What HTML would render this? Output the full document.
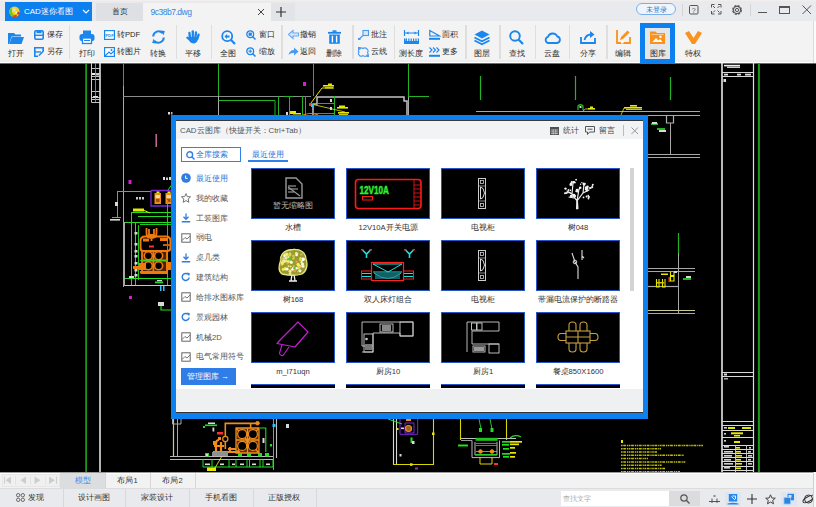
<!DOCTYPE html>
<html><head><meta charset="utf-8"><title>CAD迷你看图</title><style>
*{margin:0;padding:0;box-sizing:border-box}
html,body{width:816px;height:507px;overflow:hidden;background:#000;font-family:"Liberation Sans",sans-serif;position:relative}
.a{position:absolute}
.t{position:absolute;white-space:nowrap}
.tofu .z i{display:inline-block;width:1em;height:0.92em;vertical-align:-0.07em;overflow:hidden;text-indent:3em;font-style:normal;line-height:1;background:linear-gradient(color-mix(in srgb,currentColor 48%,transparent),color-mix(in srgb,currentColor 48%,transparent)) 50% 50%/0.9em 100% no-repeat}
svg{position:absolute;overflow:visible}
</style></head><body>

<svg width="816" height="507" style="left:0;top:0"><rect x="0" y="63" width="816" height="409" fill="#000"/><rect x="0" y="63" width="816" height="1" fill="#6a6a6a"/><line x1="86.1" y1="63" x2="86.1" y2="472" stroke="#22b422" stroke-width="1.5"/><line x1="100" y1="63" x2="100" y2="472" stroke="#e0e0e0" stroke-width="1.6"/><line x1="91.5" y1="63" x2="91.5" y2="102.5" stroke="#d0d0d0" stroke-width="1"/><line x1="91.6" y1="68.5" x2="100" y2="68.5" stroke="#d8d8d8" stroke-width="0.9"/><line x1="91.6" y1="73.5" x2="100" y2="73.5" stroke="#d8d8d8" stroke-width="0.9"/><line x1="91.6" y1="76.5" x2="100" y2="76.5" stroke="#d8d8d8" stroke-width="0.9"/><line x1="91.6" y1="79.5" x2="100" y2="79.5" stroke="#d8d8d8" stroke-width="0.9"/><line x1="91.6" y1="91.5" x2="100" y2="91.5" stroke="#d8d8d8" stroke-width="0.9"/><line x1="91.6" y1="97.5" x2="100" y2="97.5" stroke="#d8d8d8" stroke-width="0.9"/><line x1="91.6" y1="99.5" x2="100" y2="99.5" stroke="#d8d8d8" stroke-width="0.9"/><line x1="91.6" y1="102.5" x2="100" y2="102.5" stroke="#d8d8d8" stroke-width="0.9"/><line x1="95.5" y1="63" x2="95.5" y2="102" stroke="#909090" stroke-width="0.9"/><rect x="92" y="73" width="3" height="2" fill="#eee"/><rect x="96" y="74" width="3" height="1.5" fill="#ccc"/><rect x="93" y="96" width="5" height="1.6" fill="#ddd"/><line x1="123.5" y1="63" x2="123.5" y2="86" stroke="#22b422" stroke-width="1"/><line x1="123.5" y1="86" x2="123.5" y2="287" stroke="#a8a8a8" stroke-width="1"/><line x1="123" y1="96.5" x2="311" y2="96.5" stroke="#8a8a8a" stroke-width="1.1"/><line x1="218.5" y1="63" x2="218.5" y2="96" stroke="#22b422" stroke-width="1"/><line x1="218.5" y1="96" x2="218.5" y2="115" stroke="#a8a8a8" stroke-width="1"/><path d="M218.5,100.5 H275 V115" stroke="#22b422" stroke-width="1" fill="none"/><line x1="278.5" y1="96" x2="278.5" y2="115" stroke="#22b422" stroke-width="1"/><line x1="289.5" y1="96" x2="289.5" y2="115" stroke="#22b422" stroke-width="1"/><line x1="284" y1="96.5" x2="293" y2="96.5" stroke="#22b422" stroke-width="1"/><line x1="302.5" y1="96" x2="302.5" y2="115" stroke="#22b422" stroke-width="1"/><line x1="305.5" y1="96" x2="305.5" y2="115" stroke="#22b422" stroke-width="1"/><line x1="313.5" y1="63" x2="313.5" y2="96" stroke="#22b422" stroke-width="1"/><rect x="303" y="82" width="3" height="4" fill="#d020d0"/><path d="M311,103 L322,88 L334,88" stroke="#e8e800" stroke-width="1" fill="none"/><rect x="323" y="85" width="11" height="1.6" fill="#e8e800"/><rect x="325" y="87" width="8" height="1.6" fill="#c8c800"/><rect x="328" y="83.5" width="4" height="1.5" fill="#e8e800"/><path d="M313,115 V104 H317 V97 H404 V101 H407 V115" stroke="#c4c4c4" stroke-width="1.5" fill="none"/><line x1="318" y1="103.5" x2="335" y2="103.5" stroke="#22b422" stroke-width="1"/><line x1="334.5" y1="96" x2="334.5" y2="115" stroke="#22b422" stroke-width="1"/><line x1="313" y1="113.5" x2="335" y2="113.5" stroke="#22b422" stroke-width="1"/><path d="M311,104 L345,112" stroke="#e8e800" stroke-width="0.8" fill="none"/><rect x="337" y="107" width="11" height="1.6" fill="#e8e800"/><rect x="339" y="105.5" width="6" height="1.5" fill="#e8e800"/><rect x="338" y="112" width="11" height="1.6" fill="#e8e800"/><rect x="339" y="114" width="9" height="1" fill="#c8c800"/><rect x="290" y="111" width="6" height="3" fill="#e8e800"/><rect x="293" y="113" width="8" height="1.5" fill="#e8e800"/><rect x="286" y="112" width="2" height="3" fill="#d8d8d8"/><path d="M303,115 Q311,112 318,115" stroke="#f08c1e" stroke-width="1.2" fill="none"/><rect x="309" y="103" width="4" height="3" fill="#ff3030"/><rect x="311" y="104" width="3" height="3" fill="#30c0ff"/><rect x="330" y="99" width="2" height="3" fill="#d8d8d8"/><rect x="330" y="107" width="2" height="3" fill="#d8d8d8"/><line x1="408.5" y1="63" x2="408.5" y2="96" stroke="#22b422" stroke-width="1"/><line x1="408.5" y1="96" x2="408.5" y2="115" stroke="#a8a8a8" stroke-width="1"/><line x1="408" y1="96.5" x2="429" y2="96.5" stroke="#22b422" stroke-width="1"/><line x1="480.5" y1="76" x2="480.5" y2="100" stroke="#22b422" stroke-width="1.2"/><line x1="575.5" y1="76" x2="575.5" y2="100" stroke="#22b422" stroke-width="1.2"/><line x1="476" y1="111.5" x2="700" y2="111.5" stroke="#a8a8a8" stroke-width="1.2"/><line x1="648" y1="115.5" x2="700" y2="115.5" stroke="#a8a8a8" stroke-width="1.2"/><path d="M578,110 V106 Q580.5,103.5 583,106 V110" stroke="#22b422" stroke-width="1.3" fill="none"/><rect x="579.5" y="106" width="2" height="2" fill="#d8d8d8"/><rect x="588" y="108" width="7" height="1.6" fill="#e8e800"/><rect x="590" y="106.5" width="3" height="1.5" fill="#e8e800"/><path d="M583,111 Q585,108 588,109" stroke="#e8e800" stroke-width="0.8" fill="none"/><rect x="624" y="107" width="18" height="1.6" fill="#e8e800"/><rect x="630" y="105" width="7" height="1.6" fill="#e8e800"/><rect x="626" y="109" width="16" height="1" fill="#c8c800"/><line x1="621" y1="115" x2="624" y2="108" stroke="#e8e800" stroke-width="0.8"/><line x1="722" y1="63" x2="722" y2="472" stroke="#e8e8e8" stroke-width="1.6"/><line x1="753.5" y1="63" x2="753.5" y2="472" stroke="#e0e0e0" stroke-width="1.2"/><line x1="758.9" y1="63" x2="758.9" y2="472" stroke="#1a9a1a" stroke-width="2"/><line x1="722" y1="72.5" x2="753.3" y2="72.5" stroke="#d8d8d8" stroke-width="1"/><line x1="722" y1="76.5" x2="753.3" y2="76.5" stroke="#d8d8d8" stroke-width="1"/><line x1="722" y1="372.5" x2="753.3" y2="372.5" stroke="#d8d8d8" stroke-width="1"/><line x1="722" y1="376.5" x2="753.3" y2="376.5" stroke="#d8d8d8" stroke-width="1"/><line x1="722" y1="421.5" x2="753.3" y2="421.5" stroke="#d8d8d8" stroke-width="1"/><line x1="722" y1="425.5" x2="753.3" y2="425.5" stroke="#d8d8d8" stroke-width="1"/><line x1="722" y1="430.5" x2="753.3" y2="430.5" stroke="#d8d8d8" stroke-width="1"/><line x1="722" y1="437.5" x2="753.3" y2="437.5" stroke="#d8d8d8" stroke-width="1"/><line x1="722" y1="445.5" x2="753.3" y2="445.5" stroke="#d8d8d8" stroke-width="1"/><line x1="722" y1="449.5" x2="753.3" y2="449.5" stroke="#d8d8d8" stroke-width="1"/><line x1="722" y1="453.5" x2="753.3" y2="453.5" stroke="#d8d8d8" stroke-width="1"/><line x1="722" y1="457.5" x2="753.3" y2="457.5" stroke="#d8d8d8" stroke-width="1"/><line x1="722" y1="461.5" x2="753.3" y2="461.5" stroke="#d8d8d8" stroke-width="1"/><line x1="722" y1="466.5" x2="753.3" y2="466.5" stroke="#d8d8d8" stroke-width="1"/><line x1="722" y1="470.5" x2="753.3" y2="470.5" stroke="#d8d8d8" stroke-width="1"/><line x1="735.5" y1="445" x2="735.5" y2="472" stroke="#d0d0d0" stroke-width="0.9"/><line x1="746.5" y1="445" x2="746.5" y2="472" stroke="#d0d0d0" stroke-width="0.9"/><rect x="724" y="64.8" width="16" height="1.6" fill="#eee"/><rect x="727" y="66.6" width="13" height="1.4" fill="#ccc"/><rect x="724" y="73.7" width="4" height="1.8" fill="#ddd"/><rect x="737" y="73.7" width="4" height="1.8" fill="#ddd"/><rect x="745" y="73.7" width="6" height="1.8" fill="#ddd"/><rect x="723.5" y="79" width="2.5" height="3" fill="#ddd"/><rect x="724" y="373.5" width="3" height="2" fill="#ddd"/><rect x="724" y="378" width="4" height="1.5" fill="#aaa"/><rect x="728" y="427" width="7" height="2" fill="#e8e800"/><rect x="742" y="427" width="9" height="2" fill="#e8e800"/><rect x="731" y="432.3" width="12" height="2" fill="#e8e800"/><rect x="734" y="435" width="6" height="1.5" fill="#e8e800"/><rect x="734" y="441" width="6" height="2" fill="#e8e800"/><rect x="736" y="447" width="4" height="1.6" fill="#e8e800"/><rect x="736" y="451" width="5" height="1.6" fill="#e8e800"/><rect x="736" y="455" width="6" height="1.6" fill="#e8e800"/><rect x="736" y="459" width="5" height="1.6" fill="#e8e800"/><rect x="736" y="463" width="6" height="1.6" fill="#e8e800"/><rect x="736" y="467.5" width="5" height="1.6" fill="#e8e800"/><rect x="724" y="427" width="3" height="1.6" fill="#cfcfcf"/><rect x="724" y="433" width="2" height="1.6" fill="#cfcfcf"/><rect x="724" y="440" width="2" height="1.6" fill="#cfcfcf"/><rect x="724" y="446" width="5" height="1.6" fill="#cfcfcf"/><rect x="724" y="451" width="9" height="1.6" fill="#cfcfcf"/><rect x="724" y="455" width="8" height="1.6" fill="#cfcfcf"/><rect x="724" y="459" width="7" height="1.6" fill="#cfcfcf"/><rect x="724" y="463" width="9" height="1.6" fill="#cfcfcf"/><rect x="724" y="467" width="6" height="1.6" fill="#cfcfcf"/><rect x="748" y="451" width="3" height="1.6" fill="#cfcfcf"/><rect x="748" y="455" width="4" height="1.6" fill="#cfcfcf"/><rect x="748" y="459" width="3" height="1.6" fill="#cfcfcf"/><rect x="748" y="463" width="4" height="1.6" fill="#cfcfcf"/><rect x="749" y="447" width="2" height="1.6" fill="#cfcfcf"/><path d="M666.5,115 V123 H673.5 V115" stroke="#b0b0b0" stroke-width="1.2" fill="none"/><line x1="670.5" y1="77" x2="670.5" y2="100" stroke="#22b422" stroke-width="1.2"/><line x1="670.5" y1="123" x2="670.5" y2="155" stroke="#a8a8a8" stroke-width="1"/><line x1="648" y1="154.5" x2="700" y2="154.5" stroke="#a8a8a8" stroke-width="1.2"/><line x1="648" y1="157.5" x2="700" y2="157.5" stroke="#a8a8a8" stroke-width="1.2"/><rect x="651" y="123" width="7" height="2" fill="#22b422"/><rect x="652" y="122" width="5" height="2" fill="#d8d8d8"/><rect x="657" y="128" width="8" height="2" fill="#22b422"/><rect x="659" y="130" width="7" height="2" fill="#d8d8d8"/><line x1="678.5" y1="233" x2="678.5" y2="253" stroke="#22b422" stroke-width="1.2"/><line x1="678.5" y1="253" x2="678.5" y2="314" stroke="#a8a8a8" stroke-width="1"/><line x1="648" y1="268.5" x2="695" y2="268.5" stroke="#a8a8a8" stroke-width="1.2"/><line x1="648" y1="271.5" x2="695" y2="271.5" stroke="#a8a8a8" stroke-width="1.2"/><line x1="648" y1="286.5" x2="678" y2="286.5" stroke="#a8a8a8" stroke-width="1.2"/><line x1="648" y1="310.5" x2="695" y2="310.5" stroke="#c8c890" stroke-width="1.2"/><line x1="648" y1="313.5" x2="695" y2="313.5" stroke="#a8a8a8" stroke-width="1.2"/><path d="M656.5,279 V287 H659 V279 M662.5,279 V287 H665 V279" stroke="#e8e800" stroke-width="1.1" fill="none"/><rect x="657" y="282" width="7" height="1.5" fill="#c8c800"/><path d="M670.5,272 V281 H674 V272" stroke="#e8e800" stroke-width="1.1" fill="none"/><rect x="671" y="275" width="3" height="2" fill="#e8e800"/><rect x="668.5" y="277" width="1.5" height="5" fill="#ff3030"/><rect x="661" y="273.5" width="7" height="1.5" fill="#e8e800"/><rect x="674" y="271" width="3" height="2" fill="#d8d8d8"/><rect x="683" y="278" width="8" height="2" fill="#22b422"/><rect x="686" y="276" width="5" height="2" fill="#d8d8d8"/><rect x="155.5" y="134" width="1.4" height="13" fill="#d870a8"/><rect x="168" y="112" width="2" height="2.5" fill="#ddd"/><rect x="171" y="112" width="1.5" height="2.5" fill="#bbb"/><rect x="128.5" y="180" width="3" height="4" fill="#d020d0"/><rect x="163" y="177" width="2" height="3" fill="#ddd"/><rect x="166" y="177.5" width="2" height="2.5" fill="#ccc"/><rect x="169" y="177" width="2" height="3" fill="#ddd"/><line x1="168" y1="190" x2="175" y2="180" stroke="#22dd22" stroke-width="1"/><line x1="117" y1="191.5" x2="151" y2="191.5" stroke="#22dd22" stroke-width="1"/><path d="M151,190.5 H175 M151,190.5 V206 H175" stroke="#7a2ad0" stroke-width="1.3" fill="none"/><rect x="154.5" y="193" width="6.5" height="11" fill="#f08c1e"/><rect x="155.5" y="195" width="4.5" height="3" fill="#f8e0a0"/><rect x="156.0" y="199" width="3.5" height="3" fill="#a05010"/><rect x="156.5" y="191.5" width="3" height="1.5" fill="#f0f000"/><rect x="165.5" y="193" width="6.5" height="11" fill="#f08c1e"/><rect x="166.5" y="195" width="4.5" height="3" fill="#f8e0a0"/><rect x="167.0" y="199" width="3.5" height="3" fill="#a05010"/><rect x="167.5" y="191.5" width="3" height="1.5" fill="#f0f000"/><line x1="117.5" y1="191" x2="117.5" y2="217.5" stroke="#22dd22" stroke-width="1"/><rect x="115" y="202" width="3" height="4" fill="#d8d8d8"/><rect x="136" y="197" width="2" height="2.5" fill="#ccc"/><rect x="139" y="197" width="2" height="2.5" fill="#ccc"/><rect x="142" y="197" width="2" height="2.5" fill="#ccc"/><line x1="112" y1="217.5" x2="121" y2="217.5" stroke="#22dd22" stroke-width="1"/><rect x="110" y="219" width="10" height="1.6" fill="#d8d8d8"/><line x1="131" y1="212.5" x2="171" y2="212.5" stroke="#22dd22" stroke-width="1"/><rect x="133" y="208.5" width="11" height="3" fill="#e8e800"/><line x1="143" y1="210" x2="150" y2="213" stroke="#e8e800" stroke-width="1"/><line x1="131.5" y1="212" x2="131.5" y2="286" stroke="#22dd22" stroke-width="1"/><line x1="135.5" y1="222" x2="135.5" y2="286" stroke="#22dd22" stroke-width="1"/><line x1="138.5" y1="225" x2="138.5" y2="280" stroke="#22dd22" stroke-width="0.9"/><line x1="138" y1="216.5" x2="171" y2="216.5" stroke="#22dd22" stroke-width="1"/><line x1="124" y1="222.5" x2="171" y2="222.5" stroke="#22dd22" stroke-width="1.1"/><line x1="140" y1="224.5" x2="171" y2="224.5" stroke="#22dd22" stroke-width="0.9"/><line x1="167.5" y1="200" x2="167.5" y2="286" stroke="#22dd22" stroke-width="0.9"/><rect x="134.5" y="232" width="3" height="2.5" fill="#d8d8d8"/><rect x="134.5" y="243" width="3" height="2.5" fill="#d8d8d8"/><rect x="134.5" y="250" width="3" height="2.5" fill="#d8d8d8"/><rect x="134.5" y="255" width="3" height="2.5" fill="#d8d8d8"/><rect x="134.5" y="262" width="3" height="2.5" fill="#d8d8d8"/><rect x="134.5" y="269" width="3" height="2.5" fill="#d8d8d8"/><rect x="134.5" y="274" width="3" height="2.5" fill="#d8d8d8"/><rect x="142" y="251" width="25" height="22" fill="#4a2400"/><path d="M146.5,228 V233 Q146.5,238 151.5,238 Q156.5,238 156.5,233 V228 M149,229 V235 H154 V229 M151.5,238 V241" stroke="#f07a10" stroke-width="1.8" fill="none"/><path d="M140.5,241 Q140.5,236.5 145,236.5 H166 Q170.5,236.5 170.5,241 V248 Q170.5,251 167,251 H143 Q140.5,251 140.5,248 Z" stroke="#f07a10" stroke-width="2" fill="none"/><rect x="143" y="238.5" width="6" height="3" fill="#f07a10"/><rect x="160" y="238" width="8" height="3" fill="#f07a10"/><rect x="163" y="244" width="7" height="2" fill="#c06010"/><path d="M142,251 V273 H167 V251 M142,260.5 H167 M153.4,251 V273" stroke="#f07a10" stroke-width="1.8" fill="none"/><circle cx="148.3" cy="255.8" r="4" stroke="#f07a10" stroke-width="1.6" fill="#000"/><circle cx="158.6" cy="255.8" r="4" stroke="#f07a10" stroke-width="1.6" fill="#000"/><circle cx="148.3" cy="265.8" r="4" stroke="#f07a10" stroke-width="1.6" fill="#000"/><circle cx="158.6" cy="265.8" r="4" stroke="#f07a10" stroke-width="1.6" fill="#000"/><rect x="139" y="263" width="7" height="7" fill="#f07a10"/><rect x="140" y="271" width="28" height="2.5" fill="#f07a10"/><rect x="133" y="266" width="6" height="3" fill="#f07a10"/><rect x="166" y="262" width="5" height="8" fill="#f07a10"/><line x1="140" y1="260.5" x2="167" y2="260.5" stroke="#22dd22" stroke-width="0.8"/><rect x="149" y="245.5" width="5" height="2" fill="#ff3030"/><line x1="124" y1="278.5" x2="171" y2="278.5" stroke="#22dd22" stroke-width="1.2"/><line x1="124" y1="285.5" x2="171" y2="285.5" stroke="#c8c8c8" stroke-width="1.2"/><line x1="124.5" y1="222" x2="124.5" y2="286" stroke="#a8a8a8" stroke-width="1"/><rect x="155" y="281.5" width="8" height="1.8" fill="#22dd22"/><rect x="157" y="280" width="5" height="1.2" fill="#d8d8d8"/><rect x="129" y="276" width="5" height="2" fill="#d8d8d8"/><rect x="160" y="286" width="1.5" height="5" fill="#30c0ff"/><rect x="163" y="286" width="1.5" height="5" fill="#30c0ff"/><rect x="129" y="296" width="3" height="3" fill="#d020d0"/><rect x="158" y="302" width="6" height="4" fill="#d8d8d8"/><path d="M161,306 V310 H171" stroke="#22dd22" stroke-width="1.2" fill="none"/><line x1="173.5" y1="419" x2="173.5" y2="456" stroke="#c8c890" stroke-width="1.2"/><line x1="177.5" y1="419" x2="177.5" y2="456" stroke="#a8a8a8" stroke-width="1"/><path d="M172.5,419 V424 H181 V419" stroke="#a8a8a8" stroke-width="1" fill="none"/><line x1="170" y1="456.5" x2="273" y2="456.5" stroke="#b8b8b8" stroke-width="1.1"/><line x1="170" y1="459.5" x2="273" y2="459.5" stroke="#b8b8b8" stroke-width="1.1"/><rect x="236" y="428" width="23" height="25" fill="#5a3000"/><path d="M236,428 H259 V453 H236 Z M236,428 L259,453 M259,428 L236,453 M247.5,428 V453 M236,440 H259" stroke="#f08c1e" stroke-width="1.3" fill="none"/><circle cx="242.2" cy="434.1" r="4.5" stroke="#f08c1e" stroke-width="1.2" fill="#000"/><circle cx="252.9" cy="434.1" r="4.5" stroke="#f08c1e" stroke-width="1.2" fill="#000"/><circle cx="242.2" cy="445.9" r="4.5" stroke="#f08c1e" stroke-width="1.2" fill="#000"/><circle cx="252.9" cy="445.9" r="4.5" stroke="#f08c1e" stroke-width="1.2" fill="#000"/><path d="M225.3,449 V423.4 H257.4 M250.6,423.4 V428" stroke="#f08c1e" stroke-width="1.6" fill="none"/><circle cx="257.5" cy="423.2" r="1.8" stroke="#f08c1e" stroke-width="1" fill="#f08c1e"/><circle cx="225.3" cy="439" r="2.6" stroke="#f08c1e" stroke-width="1.2" fill="#000"/><path d="M213,452 H240 M216,452 V444 Q216,440 219,440 M221,452 V442 M214,446 H224 M228,449 H236 M230,452 V447" stroke="#f08c1e" stroke-width="2.2" fill="none"/><rect x="213" y="441" width="3" height="4" fill="#f08c1e"/><rect x="218" y="437" width="3" height="3" fill="#f08c1e"/><rect x="205" y="424.5" width="12" height="1.6" fill="#22dd22"/><rect x="208" y="422.5" width="7" height="1.5" fill="#ddd"/><rect x="203" y="426" width="2" height="2" fill="#22dd22"/><rect x="212.5" y="427.5" width="1.8" height="4" fill="#d8d8d8"/><rect x="217" y="432" width="6" height="2.5" fill="#ff3030"/><rect x="212" y="452" width="16" height="4" fill="#909090"/><path d="M203,459.4 V467 H273 V459.4 M212,459.4 V467 M229,459.4 V467 M236,459.4 V467 M247,459.4 V467 M249.5,459.4 V467 M260,459.4 V467 M263,459.4 V467" stroke="#22dd22" stroke-width="1" fill="none"/><rect x="205" y="463.5" width="5" height="1.6" fill="#ddd"/><rect x="220" y="463.5" width="4" height="1.6" fill="#ddd"/><rect x="232" y="463.5" width="3" height="1.6" fill="#ddd"/><rect x="240" y="463.5" width="4" height="1.6" fill="#ddd"/><rect x="252" y="463.5" width="4" height="1.6" fill="#ddd"/><rect x="266" y="463.5" width="4" height="1.6" fill="#ddd"/><rect x="205" y="453" width="4" height="3.5" fill="#22dd22"/><rect x="238" y="453" width="4" height="3.5" fill="#22dd22"/><rect x="247" y="453" width="4" height="3.5" fill="#22dd22"/><rect x="258" y="453" width="4" height="3.5" fill="#22dd22"/><rect x="265" y="453" width="4" height="3.5" fill="#22dd22"/><rect x="206" y="454" width="2" height="2" fill="#d8d8d8"/><path d="M260,428 H265.8 V452" stroke="#22dd22" stroke-width="1.1" fill="none"/><rect x="262.5" y="438" width="2" height="5" fill="#ddd"/><rect x="270" y="444" width="2" height="2.5" fill="#22dd22"/><rect x="207" y="467.5" width="9" height="3.5" fill="#e8e800"/><line x1="215" y1="468" x2="222" y2="456" stroke="#e8e800" stroke-width="0.9"/><line x1="273.5" y1="419" x2="273.5" y2="470" stroke="#30b0ff" stroke-width="1"/><line x1="276.5" y1="419" x2="276.5" y2="458" stroke="#c0c0c0" stroke-width="1.1"/><rect x="272.5" y="424" width="3" height="3" fill="#30c0ff"/><rect x="286" y="424" width="3" height="4" fill="#d8d8d8"/><line x1="393.5" y1="419" x2="393.5" y2="465" stroke="#d8d8d8" stroke-width="1.1"/><line x1="396.5" y1="419" x2="396.5" y2="465" stroke="#d8d8d8" stroke-width="1.1"/><path d="M400,419 V434.3 H417.7 V419 M405,423 H414 V433 H405 Z" stroke="#7a2ad0" stroke-width="1" fill="none"/><circle cx="408.5" cy="428.5" r="3" stroke="#f08c1e" stroke-width="1.2" fill="#a06020"/><rect x="406" y="419" width="5" height="2" fill="#f08c1e"/><line x1="388" y1="419" x2="402" y2="424" stroke="#22dd22" stroke-width="1"/><rect x="401" y="427.5" width="3" height="1.6" fill="#d8d8d8"/><rect x="396.5" y="428" width="2" height="2" fill="#e8e800"/><rect x="410.5" y="437.5" width="2" height="5.5" fill="#22dd22"/><rect x="412" y="441" width="2.5" height="3" fill="#d8d8d8"/><rect x="399.5" y="454" width="2" height="2.5" fill="#d8d8d8"/><line x1="433.5" y1="419" x2="433.5" y2="465" stroke="#d8d800" stroke-width="1.1"/><line x1="393" y1="464.5" x2="433.3" y2="464.5" stroke="#d8d800" stroke-width="1.1"/><rect x="432" y="432.5" width="2.5" height="2.5" fill="#e8e800"/><rect x="410" y="463.3" width="2.5" height="2.5" fill="#e8e800"/><rect x="415" y="467.5" width="3" height="2" fill="#9030c0"/><line x1="460.5" y1="419" x2="460.5" y2="440" stroke="#d8d800" stroke-width="1.1"/><line x1="506.5" y1="419" x2="506.5" y2="440" stroke="#d8d800" stroke-width="1.1"/><line x1="479" y1="419" x2="481" y2="429" stroke="#22dd22" stroke-width="0.9"/><line x1="490" y1="419" x2="492" y2="429" stroke="#22dd22" stroke-width="0.9"/><rect x="479" y="428" width="3" height="4" fill="#22dd22"/><rect x="490.5" y="428" width="3" height="4" fill="#22dd22"/><line x1="461" y1="438.5" x2="516" y2="438.5" stroke="#c0c0c0" stroke-width="1"/><line x1="461" y1="440.5" x2="472" y2="440.5" stroke="#c0c0c0" stroke-width="0.8"/><rect x="475.6" y="437.8" width="22" height="3" fill="#20c020"/><path d="M472,440.5 V457.6 H499.5 V440.5 M475,442 V455 H497 V442" stroke="#b8b8b8" stroke-width="1" fill="none"/><line x1="476" y1="443.5" x2="497" y2="443.5" stroke="#a08020" stroke-width="0.9"/><line x1="476" y1="445.5" x2="497" y2="445.5" stroke="#a08020" stroke-width="0.9"/><line x1="476" y1="451.5" x2="497" y2="451.5" stroke="#c0c000" stroke-width="0.8"/><circle cx="480.5" cy="451.5" r="1.8" stroke="#f08c1e" stroke-width="1" fill="#f08c1e"/><circle cx="492" cy="451.5" r="1.8" stroke="#f08c1e" stroke-width="1" fill="#f08c1e"/><line x1="476" y1="454.5" x2="497" y2="454.5" stroke="#22dd22" stroke-width="0.9"/><path d="M480,457 V464 H492 V457" stroke="#d8d800" stroke-width="1" fill="none"/><rect x="494" y="463" width="4" height="2" fill="#ff3030"/><rect x="502" y="441" width="8" height="1.7" fill="#22dd22"/><rect x="502" y="444" width="7" height="1.7" fill="#22dd22"/><rect x="503" y="448" width="6" height="1.7" fill="#22dd22"/><rect x="502" y="453" width="8" height="1.7" fill="#22dd22"/><rect x="503" y="456" width="6" height="1.7" fill="#22dd22"/><rect x="510" y="441" width="12" height="1.7" fill="#e8e800"/><rect x="510" y="443.5" width="9" height="1.7" fill="#e8e800"/><rect x="510" y="447" width="5" height="1.7" fill="#e8e800"/><rect x="510" y="452" width="6" height="1.7" fill="#e8e800"/><rect x="510" y="456" width="5" height="1.7" fill="#e8e800"/><path d="M510,438 Q515,434 521,437" stroke="#22dd22" stroke-width="1.2" fill="none"/><rect x="458" y="444.5" width="10" height="2" fill="#22dd22"/><rect x="621" y="440" width="2" height="3" fill="#e8e800"/><line x1="621" y1="445.4" x2="703" y2="445.4" stroke="#f0f000" stroke-width="1.5" stroke-dasharray="1.6 0.7 2.8 0.9 1.2 0.6" opacity="0.8"/><line x1="621" y1="448.7" x2="661" y2="448.7" stroke="#f0f000" stroke-width="1.5" stroke-dasharray="1.6 0.7 2.8 0.9 1.2 0.6" opacity="0.8"/><line x1="621" y1="452.0" x2="657" y2="452.0" stroke="#f0f000" stroke-width="1.5" stroke-dasharray="1.6 0.7 2.8 0.9 1.2 0.6" opacity="0.8"/><line x1="621" y1="455.29999999999995" x2="684" y2="455.29999999999995" stroke="#f0f000" stroke-width="1.5" stroke-dasharray="1.6 0.7 2.8 0.9 1.2 0.6" opacity="0.8"/><line x1="621" y1="458.59999999999997" x2="648" y2="458.59999999999997" stroke="#f0f000" stroke-width="1.5" stroke-dasharray="1.6 0.7 2.8 0.9 1.2 0.6" opacity="0.8"/><line x1="621" y1="461.9" x2="686" y2="461.9" stroke="#f0f000" stroke-width="1.5" stroke-dasharray="1.6 0.7 2.8 0.9 1.2 0.6" opacity="0.8"/><line x1="621" y1="465.2" x2="662" y2="465.2" stroke="#f0f000" stroke-width="1.5" stroke-dasharray="1.6 0.7 2.8 0.9 1.2 0.6" opacity="0.8"/><line x1="621" y1="468.5" x2="666" y2="468.5" stroke="#f0f000" stroke-width="1.5" stroke-dasharray="1.6 0.7 2.8 0.9 1.2 0.6" opacity="0.8"/><line x1="621" y1="471.79999999999995" x2="680" y2="471.79999999999995" stroke="#f0f000" stroke-width="1.5" stroke-dasharray="1.6 0.7 2.8 0.9 1.2 0.6" opacity="0.8"/></svg>
<div class="a" style="left:0px;top:0px;width:816px;height:21px;background:#e9eaee;"></div>
<div class="a" style="left:0px;top:0px;width:816px;height:1px;background:#f3eeee;"></div>
<div class="a" style="left:5px;top:2px;width:87px;height:19px;background:#0c80ee;"></div>
<svg width="12" height="12" style="left:8.5px;top:6px" viewBox="0 0 12 12"><circle cx="5.5" cy="5.7" r="5.2" fill="#f2d21a"/><path d="M2.2,1.8 A5.2,5.2 0 0 0 4,10.6 L5.2,8.6 A3,3 0 0 1 3.4,4 Z" fill="#6cc82a"/><path d="M3.2,10.3 A5.2,5.2 0 0 0 8.2,10.2 L7.2,8.6 Z" fill="#e8302a"/><rect x="3.4" y="2.6" width="3" height="3" fill="#c8e8e0"/><circle cx="9.3" cy="7.2" r="1.4" fill="#e8302a"/><rect x="6.3" y="5.8" width="2" height="1.6" fill="#f8f8f0"/></svg>
<div class="t" style="left:24px;top:6.0px;font-size:8.01px;color:#fff;line-height:12px;">CAD<span class="z">迷你看图</span></div>
<svg width="8" height="6" style="left:82px;top:9px"><path d="M1,1 L4,4 L7,1" stroke="#fff" stroke-width="1.1" fill="none"/></svg>
<div class="a" style="left:96px;top:3px;width:47px;height:18px;background:#dfe0e4;"></div>
<div class="t" style="left:99.5px;width:40px;text-align:center;top:6.0px;font-size:7.57px;color:#333;line-height:12px;"><span class="z">首页</span></div>
<div class="a" style="left:143px;top:3px;width:128px;height:18px;background:#f3f3f3;"></div>
<div class="t" style="left:150.5px;top:6.1px;font-size:8.54px;color:#2f88e2;line-height:12px;letter-spacing:-0.5px;">9c38b7.dwg</div>
<svg width="8" height="8" style="left:256.5px;top:8px"><path d="M1,1 L7,7 M7,1 L1,7" stroke="#444" stroke-width="1"/></svg>
<div class="a" style="left:271px;top:3px;width:24px;height:18px;background:#e3e4e8;"></div>
<svg width="10" height="10" style="left:276px;top:7px"><path d="M5,0 V10 M0,5 H10" stroke="#333" stroke-width="1.2"/></svg>
<div class="a" style="left:636px;top:3px;width:40px;height:12px;border:1.2px solid #7ab0ea;border-radius:6px;background:#f0f5fb"></div>
<div class="t" style="left:636.0px;width:40px;text-align:center;top:3.6999999999999993px;font-size:7.12px;color:#2a70c8;line-height:12px;font-weight:500;"><span class="z">未登录</span></div>
<div class="a" style="left:682px;top:4px;width:1px;height:12px;background:#d4d4d8;"></div>
<svg width="10" height="10" style="left:689px;top:4.5px"><rect x="0.5" y="0.5" width="8.5" height="8.5" rx="1" stroke="#555" fill="none"/><text x="4.75" y="7.6" font-size="7" font-family="Liberation Sans" text-anchor="middle" fill="#555">?</text></svg>
<svg width="11" height="11" style="left:711px;top:4px"><path d="M0.5,3.5 V0.5 H3.5 M7,0.5 H10 V3.5 M10,7 V10 H7 M3.5,10 H0.5 V7 M2,2 L4,4 M8.5,2 L6.5,4 M2,8.5 L4,6.5 M8.5,8.5 L6.5,6.5" stroke="#555" stroke-width="1" fill="none"/></svg>
<svg width="12" height="12" style="left:731px;top:3.5px"><circle cx="6" cy="6" r="4.2" stroke="#555" stroke-width="1.5" fill="none" stroke-dasharray="2.2 1.1"/><circle cx="6" cy="6" r="3.6" stroke="#555" stroke-width="1" fill="none"/><circle cx="6" cy="6" r="1.6" stroke="#555" stroke-width="1" fill="none"/></svg>
<div class="a" style="left:749.5px;top:4px;width:1px;height:12px;background:#d4d4d8;"></div>
<div class="a" style="left:758px;top:12px;width:9px;height:1px;background:#555;"></div>
<div class="a" style="left:779px;top:5.5px;width:10.5px;height:8px;border:1px solid #555;border-top-width:2px"></div>
<svg width="10" height="10" style="left:802px;top:4.5px"><path d="M0.5,0.5 L9,9 M9,0.5 L0.5,9" stroke="#555" stroke-width="1"/></svg>
<div class="a" style="left:0px;top:21px;width:816px;height:42px;background:#f3f3f3;"></div>
<div class="a" style="left:0px;top:60px;width:816px;height:2px;background:#ededed;"></div>
<div class="a" style="left:0px;top:62px;width:816px;height:1px;background:#ffffff;"></div>
<div class="a" style="left:68.5px;top:25px;width:1.5px;height:34px;background:#dedede;"></div>
<div class="a" style="left:175.5px;top:25px;width:1.5px;height:34px;background:#dedede;"></div>
<div class="a" style="left:210.5px;top:25px;width:1.5px;height:34px;background:#dedede;"></div>
<div class="a" style="left:281px;top:25px;width:1.5px;height:34px;background:#dedede;"></div>
<div class="a" style="left:352px;top:25px;width:1.5px;height:34px;background:#dedede;"></div>
<div class="a" style="left:393.5px;top:25px;width:1.5px;height:34px;background:#dedede;"></div>
<div class="a" style="left:465px;top:25px;width:1.5px;height:34px;background:#dedede;"></div>
<div class="a" style="left:499px;top:25px;width:1.5px;height:34px;background:#dedede;"></div>
<div class="a" style="left:534.5px;top:25px;width:1.5px;height:34px;background:#dedede;"></div>
<div class="a" style="left:568.5px;top:25px;width:1.5px;height:34px;background:#dedede;"></div>
<div class="a" style="left:606px;top:25px;width:1.5px;height:34px;background:#dedede;"></div>
<div class="a" style="left:813px;top:21px;width:1px;height:42px;background:#dcdcdc;"></div>
<div class="a" style="left:814px;top:21px;width:2px;height:42px;background:#fafafa;"></div>
<div class="a" style="left:640px;top:23px;width:35px;height:40px;background:#0c80ee;"></div>
<div class="a" style="left:645px;top:28px;width:25px;height:31px;background:#e4e6ea;"></div>
<svg width="16" height="12" style="left:7.7px;top:31.5px" viewBox="0 0 16 12"><path d="M0,1 H6 L7.5,2.5 H13 V4.5 H3.5 L1.2,12 H0 Z" fill="#1a86ee"/><path d="M3.8,5 H16 L13.5,12 H1.3 Z" fill="#1a86ee"/></svg>
<div class="t" style="left:-4.0px;width:40px;text-align:center;top:47.5px;font-size:7.57px;color:#2a2a2a;line-height:12px;font-weight:500;"><span class="z">打开</span></div>
<svg width="16" height="14" style="left:78.5px;top:30px" viewBox="0 0 16 14"><path d="M4,0.5 H12 V4 H4 Z" fill="#1a86ee"/><rect x="0.5" y="4" width="15" height="7" rx="2.5" fill="#1a86ee"/><rect x="3.5" y="8" width="9" height="5.5" fill="#fff" stroke="#1a86ee" stroke-width="1.3"/><rect x="5" y="10" width="6" height="1" fill="#1a86ee"/></svg>
<div class="t" style="left:66.5px;width:40px;text-align:center;top:47.5px;font-size:7.57px;color:#2a2a2a;line-height:12px;font-weight:500;"><span class="z">打印</span></div>
<svg width="15" height="14" style="left:150.5px;top:30.3px" viewBox="0 0 15 14"><path d="M2.2,6.5 A5.3,5.3 0 0 1 11.5,3.2" stroke="#1a86ee" stroke-width="2" fill="none"/><path d="M9.5,0.5 L13.8,1 L12.5,5.2 Z" fill="#1a86ee"/><path d="M12.8,7.5 A5.3,5.3 0 0 1 3.5,10.8" stroke="#1a86ee" stroke-width="2" fill="none"/><path d="M5.5,13.5 L1.2,13 L2.5,8.8 Z" fill="#1a86ee"/></svg>
<div class="t" style="left:137.5px;width:40px;text-align:center;top:47.5px;font-size:7.57px;color:#2a2a2a;line-height:12px;font-weight:500;"><span class="z">转换</span></div>
<svg width="14" height="14" style="left:186px;top:29.8px" viewBox="0 0 14 14"><g stroke="#1a86ee" stroke-width="2.3" stroke-linecap="round" fill="none"><path d="M4,8 L3.4,2.8"/><path d="M6.8,7 V1.3"/><path d="M9.4,7.5 L10,2.3"/><path d="M11.3,8.8 L12.6,4.6"/><path d="M5,10.5 L1.4,7.6"/></g><path d="M3.6,7 H12 L11.5,10.5 Q10.5,13.4 7.2,13.4 Q4.6,13.4 3.2,10.8 Z" fill="#1a86ee"/></svg>
<div class="t" style="left:173.0px;width:40px;text-align:center;top:47.5px;font-size:7.57px;color:#2a2a2a;line-height:12px;font-weight:500;"><span class="z">平移</span></div>
<svg width="15" height="15" style="left:220.5px;top:30px" viewBox="0 0 15 15"><circle cx="6.2" cy="6.2" r="5" stroke="#1a86ee" stroke-width="1.8" fill="none"/><path d="M9.8,9.8 L14,14" stroke="#1a86ee" stroke-width="2.2"/><path d="M3.5,6.5 L6,4 L6,9 Z" fill="#1a86ee"/><path d="M6,5.5 H8.5 V7.5 H6" fill="#1a86ee"/></svg>
<div class="t" style="left:208.0px;width:40px;text-align:center;top:47.5px;font-size:7.57px;color:#2a2a2a;line-height:12px;font-weight:500;"><span class="z">全图</span></div>
<svg width="13" height="14" style="left:327.5px;top:30px" viewBox="0 0 13 14"><rect x="4.5" y="0.3" width="4" height="1.6" fill="#1a86ee"/><rect x="0" y="1.9" width="13" height="1.8" fill="#1a86ee"/><path d="M1.2,4.5 H11.8 V13.8 H1.2 Z" fill="#1a86ee"/><rect x="3.7" y="5.8" width="1.4" height="6.6" fill="#fff"/><rect x="7.9" y="5.8" width="1.4" height="6.6" fill="#fff"/></svg>
<div class="t" style="left:314.0px;width:40px;text-align:center;top:47.5px;font-size:7.57px;color:#2a2a2a;line-height:12px;font-weight:500;"><span class="z">删除</span></div>
<svg width="15" height="14" style="left:403.7px;top:30.3px" viewBox="0 0 15 14"><path d="M0.5,0 V6 M14.5,0 V6 M0.5,3 H14.5" stroke="#1a86ee" stroke-width="1.2"/><path d="M2.5,3 L4.5,1.6 V4.4 Z M12.5,3 L10.5,1.6 V4.4 Z" fill="#1a86ee"/><path d="M0,8.5 V14 H15 V8.5 H13.8 V11 H12.6 V8.5 H11.4 V11 H10.2 V8.5 H9 V11 H7.8 V8.5 H6.6 V11 H5.4 V8.5 H4.2 V11 H3 V8.5 H1.6 V11 H1.2 V8.5 Z" fill="#1a86ee"/></svg>
<div class="t" style="left:391.0px;width:40px;text-align:center;top:47.5px;font-size:7.57px;color:#2a2a2a;line-height:12px;font-weight:500;"><span class="z">测长度</span></div>
<svg width="16" height="15" style="left:474px;top:29.5px" viewBox="0 0 16 15"><path d="M8,0.5 L15.5,4.5 L8,8.5 L0.5,4.5 Z" fill="#1a86ee"/><path d="M0.5,7.5 L8,11.3 L15.5,7.5" stroke="#1a86ee" stroke-width="1.7" fill="none"/><path d="M0.5,10.5 L8,14.3 L15.5,10.5" stroke="#1a86ee" stroke-width="1.7" fill="none"/></svg>
<div class="t" style="left:462.0px;width:40px;text-align:center;top:47.5px;font-size:7.57px;color:#2a2a2a;line-height:12px;font-weight:500;"><span class="z">图层</span></div>
<svg width="15" height="15" style="left:509px;top:30px" viewBox="0 0 15 15"><circle cx="6" cy="6" r="4.8" stroke="#1a86ee" stroke-width="1.9" fill="none"/><path d="M9.5,9.5 L14,14" stroke="#1a86ee" stroke-width="2.2"/></svg>
<div class="t" style="left:496.5px;width:40px;text-align:center;top:47.5px;font-size:7.57px;color:#2a2a2a;line-height:12px;font-weight:500;"><span class="z">查找</span></div>
<svg width="17" height="12" style="left:543.5px;top:31.5px" viewBox="0 0 17 12"><path d="M4.2,11 H13 A3.3,3.3 0 0 0 13.3,4.5 A5,5 0 0 0 4,4.8 A3.2,3.2 0 0 0 4.2,11 Z" stroke="#1a86ee" stroke-width="1.8" fill="none"/></svg>
<div class="t" style="left:532.0px;width:40px;text-align:center;top:47.5px;font-size:7.57px;color:#2a2a2a;line-height:12px;font-weight:500;"><span class="z">云盘</span></div>
<svg width="16" height="14" style="left:579.5px;top:30px" viewBox="0 0 16 14"><path d="M1,7 V13 H15 V8" stroke="#1a86ee" stroke-width="1.8" fill="none"/><path d="M4.5,10 C5.5,6 8,4.5 11,4.5" stroke="#1a86ee" stroke-width="1.8" fill="none"/><path d="M10,1 L14.5,4.5 L10,8 Z" fill="#1a86ee"/></svg>
<div class="t" style="left:567.5px;width:40px;text-align:center;top:47.5px;font-size:7.57px;color:#2a2a2a;line-height:12px;font-weight:500;"><span class="z">分享</span></div>
<svg width="15" height="14" style="left:615.5px;top:30.3px" viewBox="0 0 15 14"><path d="M1,0 V13 H14 V7" stroke="#f7931e" stroke-width="1.8" fill="none"/><path d="M4,10 L5,7 L11.5,0.5 L13.5,2.5 L7,9 Z" fill="#f7931e"/><rect x="5" y="11" width="2.5" height="2.5" fill="#fff"/></svg>
<div class="t" style="left:603.0px;width:40px;text-align:center;top:47.5px;font-size:7.57px;color:#2a2a2a;line-height:12px;font-weight:500;"><span class="z">编辑</span></div>
<svg width="15" height="13" style="left:650px;top:30.8px" viewBox="0 0 15 13"><path d="M0,0.5 H5.5 L7,2 H15 V13 H0 Z" fill="#f7931e"/><rect x="1.2" y="3" width="12.6" height="0.8" fill="#fff" opacity="0.6"/><path d="M2.5,11 L6,7 L8.5,9.5 L10,8 L12.5,11 Z" fill="#fff"/><circle cx="10.5" cy="5.8" r="1.2" fill="#fff"/></svg>
<div class="t" style="left:637.5px;width:40px;text-align:center;top:47.5px;font-size:7.57px;color:#2a2a2a;line-height:12px;font-weight:500;"><span class="z">图库</span></div>
<svg width="17" height="13" style="left:684.5px;top:31px" viewBox="0 0 17 13"><path d="M0,2 L4,0 L8.5,7 L13,0 L17,2 L10,13 H7 Z" fill="#f7931e"/></svg>
<div class="t" style="left:673.0px;width:40px;text-align:center;top:47.5px;font-size:7.57px;color:#2a2a2a;line-height:12px;font-weight:500;"><span class="z">特权</span></div>
<svg width="10" height="10" style="left:34px;top:30.200000000000003px" viewBox="0 0 10 10"><rect x="0.8" y="0.8" width="8.4" height="8.4" rx="1.2" stroke="#1a86ee" stroke-width="1.6" fill="none"/><rect x="2.5" y="1" width="5" height="2.2" fill="#1a86ee"/><rect x="1" y="4.6" width="8" height="1.4" fill="#1a86ee"/></svg>
<div class="t" style="left:46.5px;top:29.200000000000003px;font-size:7.57px;color:#2a2a2a;line-height:12px;font-weight:500;"><span class="z">保存</span></div>
<svg width="10" height="10" style="left:34px;top:47.0px" viewBox="0 0 10 10"><path d="M9.2,4 V0.8 H0.8 V9.2 H4" stroke="#1a86ee" stroke-width="1.6" fill="none"/><rect x="1" y="4.3" width="6" height="1.3" fill="#1a86ee"/><path d="M4.5,9.5 L5,7.5 L9,3.5 L10,4.5 L6,8.5 Z" fill="#1a86ee"/></svg>
<div class="t" style="left:46.5px;top:46.0px;font-size:7.57px;color:#2a2a2a;line-height:12px;font-weight:500;"><span class="z">另存</span></div>
<svg width="11" height="10" style="left:104px;top:30.200000000000003px" viewBox="0 0 11 10"><rect x="0.6" y="0.6" width="9.8" height="8.8" stroke="#1a86ee" stroke-width="1.2" fill="#fff"/><text x="5.5" y="6.8" font-size="4.2" font-weight="bold" font-family="Liberation Sans" text-anchor="middle" fill="#1a86ee">PDF</text></svg>
<div class="t" style="left:117px;top:29.200000000000003px;font-size:7.57px;color:#2a2a2a;line-height:12px;font-weight:500;"><span class="z">转</span>PDF</div>
<svg width="11" height="10" style="left:104px;top:47.0px" viewBox="0 0 11 10"><rect x="0.6" y="0.6" width="9.8" height="8.8" stroke="#1a86ee" stroke-width="1.2" fill="#fff"/><path d="M1,9 L5,5 L7,7 L10,4" stroke="#1a86ee" stroke-width="1.1" fill="none"/><circle cx="7.5" cy="3" r="1" fill="#1a86ee"/></svg>
<div class="t" style="left:117px;top:46.0px;font-size:7.57px;color:#2a2a2a;line-height:12px;font-weight:500;"><span class="z">转图片</span></div>
<svg width="10" height="10" style="left:245.5px;top:30.200000000000003px" viewBox="0 0 10 10"><circle cx="4.2" cy="4.2" r="3.4" stroke="#1a86ee" stroke-width="1.3" fill="none"/><rect x="2.6" y="2.6" width="3.2" height="3.2" fill="#1a86ee"/><path d="M6.5,6.5 L9.5,9.5" stroke="#1a86ee" stroke-width="1.5"/></svg>
<div class="t" style="left:259px;top:29.200000000000003px;font-size:7.57px;color:#2a2a2a;line-height:12px;font-weight:500;"><span class="z">窗口</span></div>
<svg width="10" height="10" style="left:245.5px;top:47.0px" viewBox="0 0 10 10"><circle cx="4.2" cy="4.2" r="3.4" stroke="#1a86ee" stroke-width="1.3" fill="none"/><path d="M2.4,4.2 H6 M4.2,2.4 V6" stroke="#1a86ee" stroke-width="1"/><path d="M6.5,6.5 L9.5,9.5" stroke="#1a86ee" stroke-width="1.5"/></svg>
<div class="t" style="left:259px;top:46.0px;font-size:7.57px;color:#2a2a2a;line-height:12px;font-weight:500;"><span class="z">缩放</span></div>
<svg width="11" height="9" style="left:288px;top:30.200000000000003px" viewBox="0 0 11 9"><path d="M0.5,4.5 L5,0.5 V3 H10.5 V6 H5 V8.5 Z" stroke="#6aaaf0" stroke-width="1.1" fill="#d6e8fb"/></svg>
<div class="t" style="left:300px;top:29.200000000000003px;font-size:7.57px;color:#2a2a2a;line-height:12px;font-weight:500;"><span class="z">撤销</span></div>
<svg width="11" height="9" style="left:288px;top:47.0px" viewBox="0 0 11 9"><path d="M10.5,4.5 L6,0.5 V3 C3,3 1,5 0.5,8 C2,6.5 3.5,6 6,6 V8.5 Z" fill="#4a9af0"/></svg>
<div class="t" style="left:300px;top:46.0px;font-size:7.57px;color:#2a2a2a;line-height:12px;font-weight:500;"><span class="z">返回</span></div>
<svg width="11" height="10" style="left:358px;top:30.200000000000003px" viewBox="0 0 11 10"><rect x="5" y="0.5" width="5.5" height="5" stroke="#4a9af0" stroke-width="1.1" fill="#d6e8fb"/><path d="M0.5,9.5 L5,5.5" stroke="#4a9af0" stroke-width="1.1"/><rect x="0" y="8" width="2.5" height="2" fill="#4a9af0"/></svg>
<div class="t" style="left:371px;top:29.200000000000003px;font-size:7.57px;color:#2a2a2a;line-height:12px;font-weight:500;"><span class="z">批注</span></div>
<svg width="11" height="10" style="left:358px;top:47.0px" viewBox="0 0 11 10"><path d="M1.5,2 Q3,0 5,1.5 Q7,0 9,2 Q11,4 9.5,5.5 Q11,8 8.5,9 Q6,10 5,8.5 Q3,10 1.5,8.5 Q-0.5,6.5 1,5 Q-0.5,3.5 1.5,2 Z" stroke="#4a9af0" stroke-width="1.1" fill="none"/><rect x="0" y="0" width="2.5" height="2.5" fill="#4a9af0"/><rect x="8.5" y="7.5" width="2.5" height="2.5" fill="#4a9af0"/></svg>
<div class="t" style="left:371px;top:46.0px;font-size:7.57px;color:#2a2a2a;line-height:12px;font-weight:500;"><span class="z">云线</span></div>
<svg width="11" height="10" style="left:429px;top:30.200000000000003px" viewBox="0 0 11 10"><path d="M0.8,0.5 V6 H10.5 Z" stroke="#1a86ee" stroke-width="1.2" fill="none"/><rect x="0" y="7.8" width="11" height="2" fill="#1a86ee"/></svg>
<div class="t" style="left:442px;top:29.200000000000003px;font-size:7.57px;color:#2a2a2a;line-height:12px;font-weight:500;"><span class="z">面积</span></div>
<svg width="11" height="10" style="left:429px;top:47.0px" viewBox="0 0 11 10"><path d="M0.5,0.5 L3,3 L0.5,5.5 M4,0.5 L6.5,3 L4,5.5 M7.5,0.5 L10,3 L7.5,5.5" stroke="#1a86ee" stroke-width="1.1" fill="none"/><rect x="0" y="7.8" width="11" height="2" fill="#1a86ee"/></svg>
<div class="t" style="left:442px;top:46.0px;font-size:7.57px;color:#2a2a2a;line-height:12px;font-weight:500;"><span class="z">更多</span></div>
<div class="a" style="left:0px;top:472px;width:816px;height:16px;background:#f2f2f2;"></div>
<div class="a" style="left:0px;top:472px;width:816px;height:1px;background:#9a9a9a;"></div>
<div class="a" style="left:0px;top:473px;width:816px;height:1px;background:#ffffff;"></div>
<div class="a" style="left:2px;top:474px;width:58px;height:13px;border:1px solid #e6e6e6;background:#f0f0f0"></div>
<svg width="60" height="12" style="left:0px;top:474px" viewBox="0 0 60 12"><path d="M4.5,2.5 V10" stroke="#d0d0d0" stroke-width="1"/><path d="M11,2.5 L5.5,6.2 L11,10 Z M26,2.5 L20.5,6.2 L26,10 Z M34.5,2.5 L40.5,6.2 L34.5,10 Z M49,2.5 L55,6.2 L49,10 Z" fill="#cdcdcd"/><path d="M56.5,2.5 V10" stroke="#d0d0d0" stroke-width="1.2"/><path d="M15.5,2 V11 M30.5,2 V11 M45.5,2 V11" stroke="#e4e4e4" stroke-width="1"/></svg>
<div class="a" style="left:60px;top:473px;width:45px;height:15px;background:#dcdde0;"></div>
<div class="t" style="left:62.5px;width:40px;text-align:center;top:475.0px;font-size:7.57px;color:#2f8ef0;line-height:12px;font-weight:500;"><span class="z">模型</span></div>
<div class="a" style="left:105px;top:473px;width:1px;height:15px;background:#d6d6d6;"></div>
<div class="t" style="left:107.5px;width:40px;text-align:center;top:475.0px;font-size:7.57px;color:#333;line-height:12px;"><span class="z">布局</span>1</div>
<div class="a" style="left:149.5px;top:473px;width:1px;height:15px;background:#d6d6d6;"></div>
<div class="t" style="left:152.5px;width:40px;text-align:center;top:475.0px;font-size:7.57px;color:#333;line-height:12px;"><span class="z">布局</span>2</div>
<div class="a" style="left:195px;top:473px;width:1px;height:15px;background:#d6d6d6;"></div>
<div class="a" style="left:0px;top:488px;width:816px;height:19px;background:#e9eaed;"></div>
<div class="a" style="left:0px;top:488px;width:816px;height:1px;background:#dcdcdc;"></div>
<div class="a" style="left:62.5px;top:489px;width:1px;height:18px;background:#d8d8da;"></div>
<div class="a" style="left:125px;top:489px;width:1px;height:18px;background:#d8d8da;"></div>
<div class="a" style="left:189px;top:489px;width:1px;height:18px;background:#d8d8da;"></div>
<div class="a" style="left:253px;top:489px;width:1px;height:18px;background:#d8d8da;"></div>
<div class="a" style="left:315.5px;top:489px;width:1px;height:18px;background:#d8d8da;"></div>
<svg width="9" height="9" style="left:15.5px;top:493px" viewBox="0 0 9 9"><circle cx="2.2" cy="2.2" r="1.7" stroke="#666" stroke-width="1" fill="none"/><circle cx="6.8" cy="2.2" r="1.7" stroke="#666" stroke-width="1" fill="none"/><circle cx="2.2" cy="6.8" r="1.7" stroke="#666" stroke-width="1" fill="none"/><circle cx="6.8" cy="6.8" r="1.7" stroke="#666" stroke-width="1" fill="none"/></svg>
<div class="t" style="left:28px;top:492.0px;font-size:7.57px;color:#333;line-height:12px;"><span class="z">发现</span></div>
<div class="t" style="left:64.0px;width:60px;text-align:center;top:492.0px;font-size:7.57px;color:#333;line-height:12px;"><span class="z">设计画图</span></div>
<div class="t" style="left:127.0px;width:60px;text-align:center;top:492.0px;font-size:7.57px;color:#333;line-height:12px;"><span class="z">家装设计</span></div>
<div class="t" style="left:190.5px;width:60px;text-align:center;top:492.0px;font-size:7.57px;color:#333;line-height:12px;"><span class="z">手机看图</span></div>
<div class="t" style="left:254.0px;width:60px;text-align:center;top:492.0px;font-size:7.57px;color:#333;line-height:12px;"><span class="z">正版授权</span></div>
<div class="a" style="left:561px;top:491px;width:108px;height:14.5px;background:#fff;"></div>
<div class="t" style="left:563px;top:492.5px;font-size:7.12px;color:#aaa;line-height:12px;"><span class="z">查找文字</span></div>
<div class="a" style="left:669px;top:491px;width:31px;height:14.5px;background:#dcdcde;"></div>
<svg width="10" height="10" style="left:680px;top:493.5px"><circle cx="4" cy="4" r="3.2" stroke="#555" stroke-width="1.2" fill="none"/><path d="M6.3,6.3 L9.5,9.5" stroke="#555" stroke-width="1.3"/></svg>
<svg width="11" height="8" style="left:708.5px;top:494.5px" viewBox="0 0 11 8"><path d="M0,6.5 H11 M3,3.5 V8 M8,3.5 V8" stroke="#555" stroke-width="1"/><rect x="4.5" y="0" width="2" height="2" fill="#888"/></svg>
<div class="a" style="left:725px;top:491.5px;width:16px;height:14.5px;background:#dde6f1;"></div>
<svg width="12" height="12" style="left:727px;top:492.5px" viewBox="0 0 12 12"><rect x="1.8" y="1" width="8.4" height="7.5" fill="#2a86e6"/><path d="M4.5,3.5 L8,7 M5.5,3 H8.5 V6" stroke="#e8f0fa" stroke-width="1" fill="none"/><path d="M0.5,10.5 Q6,9 11.5,10.5 V11.5 H0.5 Z" fill="#2a86e6"/></svg>
<svg width="10" height="10" style="left:747px;top:494px"><path d="M5,0 V10 M0,5 H10" stroke="#333" stroke-width="1.1"/></svg>
<svg width="11" height="11" style="left:765px;top:493.5px" viewBox="0 0 11 11"><path d="M5.5,0.8 L6.9,4 L10.3,4.2 L7.7,6.4 L8.5,9.8 L5.5,8 L2.5,9.8 L3.3,6.4 L0.7,4.2 L4.1,4 Z" stroke="#444" stroke-width="1" fill="none"/></svg>
<div class="a" style="left:780.5px;top:491.5px;width:16px;height:14.5px;background:#dde6f1;"></div>
<svg width="12" height="12" style="left:782.5px;top:492.5px" viewBox="0 0 12 12"><rect x="4.5" y="0.8" width="6.5" height="6.5" fill="#2a86e6"/><rect x="1" y="4.5" width="6.5" height="6.5" fill="#2a86e6" stroke="#9cc4f2" stroke-width="0.8"/><rect x="5.5" y="2" width="3" height="2.5" fill="#cfe2f8"/></svg>
<svg width="13" height="12" style="left:801.5px;top:493px" viewBox="0 0 13 12"><circle cx="6.5" cy="6" r="4" stroke="#333" stroke-width="1" fill="none"/><ellipse cx="6.5" cy="6" rx="6.2" ry="2.3" transform="rotate(-30 6.5 6)" stroke="#333" stroke-width="1" fill="none"/></svg>
<div class="a" style="left:813px;top:472px;width:1px;height:35px;background:#d0d0d4;"></div>
<div class="a" style="left:814px;top:472px;width:2px;height:35px;background:#f8f8f8;"></div>
<div class="a" style="left:171px;top:115px;width:477px;height:304px;background:#0c80ee;"></div>
<div class="a" style="left:176px;top:120px;width:467px;height:292.5px;background:#fff;"></div>
<div class="a" style="left:176px;top:121px;width:467px;height:18px;background:#f2f3f5;"></div>
<div class="a" style="left:176px;top:120px;width:467px;height:1px;background:#3a3a3a;"></div>
<div class="t" style="left:180px;top:125.0px;font-size:7.83px;color:#555;line-height:12px;">CAD<span class="z">云图库（快捷开关：</span>Ctrl+Tab<span class="z">）</span></div>
<svg width="9" height="8" style="left:549.5px;top:126.8px" viewBox="0 0 9 8"><rect x="0" y="0" width="9" height="8" fill="#505050"/><path d="M0.8,3 H8.2 M0.8,4.9 H8.2 M0.8,6.6 H8.2 M3.2,2.4 V7.5 M5.8,2.4 V7.5" stroke="#e8e8e8" stroke-width="0.6"/></svg>
<div class="t" style="left:562.5px;top:125.0px;font-size:7.83px;color:#444;line-height:12px;"><span class="z">统计</span></div>
<svg width="10" height="9" style="left:584.5px;top:126px" viewBox="0 0 10 9"><path d="M0.5,0.5 H9.5 V6 H4.5 L2.5,8.5 V6 H0.5 Z" stroke="#555" stroke-width="1" fill="none"/><path d="M2.5,3.2 H7.5" stroke="#555" stroke-width="1"/></svg>
<div class="t" style="left:598.5px;top:125.0px;font-size:7.83px;color:#444;line-height:12px;"><span class="z">留言</span></div>
<div class="a" style="left:623px;top:125px;width:1px;height:11px;background:#bbb;"></div>
<svg width="8" height="8" style="left:630.5px;top:126.8px" viewBox="0 0 8 8"><path d="M0.5,0.5 L7,7 M7,0.5 L0.5,7" stroke="#8a8a8a" stroke-width="0.9"/></svg>
<div class="a" style="left:181px;top:147px;width:59.5px;height:15px;border:1.5px solid #2f80ed;background:#fff"></div>
<svg width="9" height="9" style="left:185.5px;top:150.5px" viewBox="0 0 9 9"><circle cx="3.7" cy="3.7" r="2.9" stroke="#2f80ed" stroke-width="1.4" fill="none"/><path d="M5.8,5.8 L8.5,8.5" stroke="#2f80ed" stroke-width="1.5"/></svg>
<div class="t" style="left:196px;top:149.0px;font-size:7.83px;color:#2a6fd6;line-height:12px;font-weight:500;"><span class="z">全库搜索</span></div>
<div class="t" style="left:251.5px;top:148.5px;font-size:7.83px;color:#2a6fd6;line-height:12px;font-weight:500;"><span class="z">最近使用</span></div>
<div class="a" style="left:248px;top:160px;width:40px;height:1.6px;background:#2f80ed;"></div>
<svg width="10" height="10" style="left:181px;top:173px" viewBox="0 0 10 10"><circle cx="5" cy="5" r="4.8" fill="#2f7de1"/><path d="M4.6,2.6 V5.4 H6.6" stroke="#fff" stroke-width="1" fill="none"/></svg>
<div class="t" style="left:196px;top:172.5px;font-size:7.65px;color:#2a6fd6;line-height:12px;"><span class="z">最近使用</span></div>
<svg width="10" height="10" style="left:181px;top:193px" viewBox="0 0 10 10"><path d="M5,0.6 L6.3,3.6 L9.6,3.8 L7.1,6 L7.9,9.3 L5,7.6 L2.1,9.3 L2.9,6 L0.4,3.8 L3.7,3.6 Z" stroke="#666" stroke-width="0.9" fill="none"/></svg>
<div class="t" style="left:196px;top:192.5px;font-size:7.65px;color:#555;line-height:12px;"><span class="z">我的收藏</span></div>
<svg width="10" height="10" style="left:181px;top:213px" viewBox="0 0 10 10"><path d="M5,0.5 V6 M2.5,3.8 L5,6.3 L7.5,3.8" stroke="#2f7de1" stroke-width="1.3" fill="none"/><rect x="0.8" y="8" width="8.4" height="1.5" fill="#2f7de1"/></svg>
<div class="t" style="left:196px;top:212.5px;font-size:7.65px;color:#555;line-height:12px;"><span class="z">工装图库</span></div>
<svg width="10" height="10" style="left:181px;top:232.8px" viewBox="0 0 10 10"><rect x="0.8" y="0.8" width="8.4" height="8.4" stroke="#666" stroke-width="1" fill="none"/><path d="M1,7.5 L4,4.5 L6,6 L9,3" stroke="#666" stroke-width="0.9" fill="none"/></svg>
<div class="t" style="left:196px;top:232.3px;font-size:7.65px;color:#555;line-height:12px;"><span class="z">弱电</span></div>
<svg width="10" height="10" style="left:181px;top:252.5px" viewBox="0 0 10 10"><path d="M5,0.5 V6 M2.5,3.8 L5,6.3 L7.5,3.8" stroke="#2f7de1" stroke-width="1.3" fill="none"/><rect x="0.8" y="8" width="8.4" height="1.5" fill="#2f7de1"/></svg>
<div class="t" style="left:196px;top:252.0px;font-size:7.65px;color:#555;line-height:12px;"><span class="z">桌几类</span></div>
<svg width="10" height="10" style="left:181px;top:272.4px" viewBox="0 0 10 10"><path d="M8.2,5.5 A3.5,3.5 0 1 1 7,2.3" stroke="#2f7de1" stroke-width="1.5" fill="none"/><path d="M5.8,0.5 L9,1.2 L8,4.2 Z" fill="#2f7de1"/></svg>
<div class="t" style="left:196px;top:271.9px;font-size:7.65px;color:#555;line-height:12px;"><span class="z">建筑结构</span></div>
<svg width="10" height="10" style="left:181px;top:292.3px" viewBox="0 0 10 10"><rect x="0.8" y="0.8" width="8.4" height="8.4" stroke="#666" stroke-width="1" fill="none"/><path d="M1,7.5 L4,4.5 L6,6 L9,3" stroke="#666" stroke-width="0.9" fill="none"/></svg>
<div class="t" style="left:196px;top:291.8px;font-size:7.65px;color:#555;line-height:12px;"><span class="z">给排水图标库</span></div>
<svg width="10" height="10" style="left:181px;top:312.1px" viewBox="0 0 10 10"><path d="M8.2,5.5 A3.5,3.5 0 1 1 7,2.3" stroke="#2f7de1" stroke-width="1.5" fill="none"/><path d="M5.8,0.5 L9,1.2 L8,4.2 Z" fill="#2f7de1"/></svg>
<div class="t" style="left:196px;top:311.6px;font-size:7.65px;color:#555;line-height:12px;"><span class="z">景观园林</span></div>
<svg width="10" height="10" style="left:181px;top:332px" viewBox="0 0 10 10"><rect x="0.8" y="0.8" width="8.4" height="8.4" stroke="#666" stroke-width="1" fill="none"/><path d="M1,7.5 L4,4.5 L6,6 L9,3" stroke="#666" stroke-width="0.9" fill="none"/></svg>
<div class="t" style="left:196px;top:331.5px;font-size:7.65px;color:#555;line-height:12px;"><span class="z">机械</span>2D</div>
<svg width="10" height="10" style="left:181px;top:351.8px" viewBox="0 0 10 10"><rect x="0.8" y="0.8" width="8.4" height="8.4" stroke="#666" stroke-width="1" fill="none"/><path d="M1,7.5 L4,4.5 L6,6 L9,3" stroke="#666" stroke-width="0.9" fill="none"/></svg>
<div class="t" style="left:196px;top:351.3px;font-size:7.65px;color:#555;line-height:12px;"><span class="z">电气常用符号</span></div>
<div class="a" style="left:180.5px;top:368px;width:55.5px;height:16.5px;background:#2f7de6;"></div>
<div class="t" style="left:180.0px;width:56px;text-align:center;top:370.8px;font-size:7.65px;color:#fff;line-height:12px;"><span class="z">管理图库</span> →</div>
<div class="a" style="left:630px;top:167.5px;width:4px;height:123px;background:#d4d4d4;"></div>
<div class="a" style="left:176px;top:389px;width:467px;height:22px;background:#eff0f2;"></div>
<div class="a" style="left:176px;top:411px;width:467px;height:1px;background:#fafafa;"></div>
<div class="a" style="left:176px;top:412px;width:467px;height:1.2px;background:#333;"></div>
<div class="a" style="left:251px;top:168px;width:84px;height:51px;background:#000;border:1px solid #2458c8"></div>
<div class="t" style="left:248.0px;width:90px;text-align:center;top:221.5px;font-size:7.65px;color:#333;line-height:12px;"><span class="z">水槽</span></div>
<div class="a" style="left:346px;top:168px;width:84px;height:51px;background:#000;border:1px solid #2458c8"></div>
<div class="t" style="left:343.0px;width:90px;text-align:center;top:221.5px;font-size:7.65px;color:#333;line-height:12px;">12V10A<span class="z">开关电源</span></div>
<div class="a" style="left:441px;top:168px;width:84px;height:51px;background:#000;border:1px solid #2458c8"></div>
<div class="t" style="left:438.0px;width:90px;text-align:center;top:221.5px;font-size:7.65px;color:#333;line-height:12px;"><span class="z">电视柜</span></div>
<div class="a" style="left:536px;top:168px;width:84px;height:51px;background:#000;border:1px solid #2458c8"></div>
<div class="t" style="left:533.0px;width:90px;text-align:center;top:221.5px;font-size:7.65px;color:#333;line-height:12px;"><span class="z">树</span>048</div>
<div class="a" style="left:251px;top:240px;width:84px;height:51px;background:#000;border:1px solid #2458c8"></div>
<div class="t" style="left:248.0px;width:90px;text-align:center;top:293.5px;font-size:7.65px;color:#333;line-height:12px;"><span class="z">树</span>168</div>
<div class="a" style="left:346px;top:240px;width:84px;height:51px;background:#000;border:1px solid #2458c8"></div>
<div class="t" style="left:343.0px;width:90px;text-align:center;top:293.5px;font-size:7.65px;color:#333;line-height:12px;"><span class="z">双人床灯组合</span></div>
<div class="a" style="left:441px;top:240px;width:84px;height:51px;background:#000;border:1px solid #2458c8"></div>
<div class="t" style="left:438.0px;width:90px;text-align:center;top:293.5px;font-size:7.65px;color:#333;line-height:12px;"><span class="z">电视柜</span></div>
<div class="a" style="left:536px;top:240px;width:84px;height:51px;background:#000;border:1px solid #2458c8"></div>
<div class="t" style="left:533.0px;width:90px;text-align:center;top:293.5px;font-size:7.65px;color:#333;line-height:12px;"><span class="z">带漏电流保护的断路器</span></div>
<div class="a" style="left:251px;top:312px;width:84px;height:51px;background:#000;border:1px solid #2458c8"></div>
<div class="t" style="left:248.0px;width:90px;text-align:center;top:365.5px;font-size:7.65px;color:#333;line-height:12px;">m_i71uqn</div>
<div class="a" style="left:346px;top:312px;width:84px;height:51px;background:#000;border:1px solid #2458c8"></div>
<div class="t" style="left:343.0px;width:90px;text-align:center;top:365.5px;font-size:7.65px;color:#333;line-height:12px;"><span class="z">厨房</span>10</div>
<div class="a" style="left:441px;top:312px;width:84px;height:51px;background:#000;border:1px solid #2458c8"></div>
<div class="t" style="left:438.0px;width:90px;text-align:center;top:365.5px;font-size:7.65px;color:#333;line-height:12px;"><span class="z">厨房</span>1</div>
<div class="a" style="left:536px;top:312px;width:84px;height:51px;background:#000;border:1px solid #2458c8"></div>
<div class="t" style="left:533.0px;width:90px;text-align:center;top:365.5px;font-size:7.65px;color:#333;line-height:12px;"><span class="z">餐桌</span>850X1600</div>
<div class="a" style="left:251px;top:384px;width:84px;height:3.5px;background:#000;border-top:1px solid #2458c8"></div>
<div class="a" style="left:346px;top:384px;width:84px;height:3.5px;background:#000;border-top:1px solid #2458c8"></div>
<div class="a" style="left:441px;top:384px;width:84px;height:3.5px;background:#000;border-top:1px solid #2458c8"></div>
<div class="a" style="left:536px;top:384px;width:84px;height:3.5px;background:#000;border-top:1px solid #2458c8"></div>
<svg width="20" height="22" style="left:284px;top:177px" viewBox="0 0 20 22"><path d="M2,1 H12 L18,7 V21 H2 Z" stroke="#999" stroke-width="1.4" fill="none"/><path d="M4,9 H12 M4,12 H14 M4,15 H10" stroke="#777" stroke-width="1.5"/><path d="M4,10 L16,19" stroke="#999" stroke-width="1.2"/></svg>
<div class="t" style="left:263.0px;width:60px;text-align:center;top:199.5px;font-size:7.83px;color:#bbb;line-height:12px;"><span class="z">暂无缩略图</span></div>
<svg width="84" height="51" style="left:346px;top:168px" viewBox="0 0 84 51"><rect x="9.5" y="11.5" width="65.5" height="29" rx="3" stroke="#ff1a1a" stroke-width="1.6" fill="none"/><path d="M68,12 V40 M68,17 H75 M68,21 H75 M68,25 H75 M68,29 H75 M68,33 H75 M68,37 H75" stroke="#ff1a1a" stroke-width="0.8"/><rect x="16.5" y="28.5" width="10" height="3.5" stroke="#ff1a1a" stroke-width="1" fill="none"/><text x="13.5" y="25.5" font-size="10.5" font-weight="bold" font-family="Liberation Sans" fill="#2ef02e" stroke="#2ef02e" stroke-width="0.45" textLength="29.5" lengthAdjust="spacingAndGlyphs">12V10A</text></svg>
<svg width="84" height="51" style="left:441px;top:168px" viewBox="0 0 84 51"><rect x="37.5" y="10.5" width="7" height="30" stroke="#ccc" stroke-width="1" fill="none"/><rect x="39.5" y="12.5" width="3" height="3" stroke="#ccc" stroke-width="0.8" fill="none"/><rect x="39.5" y="35.5" width="3" height="3" stroke="#ccc" stroke-width="0.8" fill="none"/><path d="M39.5,19 V31 Q42.5,31 43.5,25 Q42.5,19 39.5,19 Z" stroke="#ddd" stroke-width="1" fill="none"/><path d="M37.5,18 H44.5 M37.5,33 H44.5" stroke="#aaa" stroke-width="0.8"/></svg>
<svg width="84" height="51" style="left:441px;top:240px" viewBox="0 0 84 51"><rect x="37.5" y="10.5" width="7" height="30" stroke="#ccc" stroke-width="1" fill="none"/><rect x="39.5" y="12.5" width="3" height="3" stroke="#ccc" stroke-width="0.8" fill="none"/><rect x="39.5" y="35.5" width="3" height="3" stroke="#ccc" stroke-width="0.8" fill="none"/><path d="M39.5,19 V31 Q42.5,31 43.5,25 Q42.5,19 39.5,19 Z" stroke="#ddd" stroke-width="1" fill="none"/><path d="M37.5,18 H44.5 M37.5,33 H44.5" stroke="#aaa" stroke-width="0.8"/></svg>
<svg width="84" height="51" style="left:536px;top:168px" viewBox="0 0 84 51"><g stroke="#eee" stroke-width="1.2" fill="none" stroke-linecap="round"><path d="M41,41 V33 L36,26 L31,23 M41,33 L47,25 L53,22 M36,26 L37,15 M47,25 L48,16 M41,33 L43,21 M38,30 L33,29"/></g><path d="M40,41 H42.5 L42,33 H40.5 Z" fill="#eee"/><circle cx="37.7" cy="14.3" r="1.3" fill="#f2f2f2"/><circle cx="37.8" cy="14.0" r="1.1" fill="#f2f2f2"/><circle cx="35.8" cy="14.1" r="1.1" fill="#f2f2f2"/><circle cx="40.1" cy="11.7" r="0.9" fill="#f2f2f2"/><circle cx="35.1" cy="15.7" r="1.2" fill="#f2f2f2"/><circle cx="34.8" cy="16.7" r="1.4" fill="#f2f2f2"/><circle cx="39.1" cy="14.6" r="0.8" fill="#f2f2f2"/><circle cx="44.6" cy="16.2" r="0.7" fill="#f2f2f2"/><circle cx="45.8" cy="14.6" r="0.7" fill="#f2f2f2"/><circle cx="47.7" cy="15.7" r="1.3" fill="#f2f2f2"/><circle cx="48.1" cy="16.8" r="1.0" fill="#f2f2f2"/><circle cx="49.1" cy="15.8" r="0.9" fill="#f2f2f2"/><circle cx="51.5" cy="18.8" r="1.3" fill="#f2f2f2"/><circle cx="32.5" cy="22.0" r="0.9" fill="#f2f2f2"/><circle cx="29.5" cy="20.6" r="1.2" fill="#f2f2f2"/><circle cx="30.3" cy="24.9" r="1.0" fill="#f2f2f2"/><circle cx="34.2" cy="24.9" r="0.7" fill="#f2f2f2"/><circle cx="29.0" cy="25.3" r="1.0" fill="#f2f2f2"/><circle cx="34.4" cy="22.4" r="0.8" fill="#f2f2f2"/><circle cx="31.9" cy="24.6" r="0.9" fill="#f2f2f2"/><circle cx="50.1" cy="21.1" r="1.4" fill="#f2f2f2"/><circle cx="54.8" cy="19.9" r="0.9" fill="#f2f2f2"/><circle cx="50.2" cy="19.5" r="1.3" fill="#f2f2f2"/><circle cx="50.7" cy="22.3" r="1.0" fill="#f2f2f2"/><circle cx="50.8" cy="23.3" r="0.8" fill="#f2f2f2"/><circle cx="54.0" cy="19.9" r="1.0" fill="#f2f2f2"/><circle cx="51.0" cy="20.7" r="1.4" fill="#f2f2f2"/><circle cx="38.8" cy="28.1" r="1.3" fill="#f2f2f2"/><circle cx="35.3" cy="28.5" r="1.3" fill="#f2f2f2"/><circle cx="37.9" cy="27.1" r="1.4" fill="#f2f2f2"/><circle cx="35.3" cy="27.8" r="1.2" fill="#f2f2f2"/><circle cx="36.0" cy="28.0" r="0.8" fill="#f2f2f2"/><circle cx="47.5" cy="29.4" r="0.9" fill="#f2f2f2"/><circle cx="50.6" cy="28.4" r="1.0" fill="#f2f2f2"/><circle cx="52.8" cy="28.9" r="1.1" fill="#f2f2f2"/><circle cx="52.2" cy="27.5" r="0.8" fill="#f2f2f2"/><circle cx="52.5" cy="30.5" r="0.9" fill="#f2f2f2"/><circle cx="41.1" cy="22.1" r="1.4" fill="#f2f2f2"/><circle cx="41.2" cy="23.2" r="1.3" fill="#f2f2f2"/><circle cx="43.6" cy="20.6" r="0.8" fill="#f2f2f2"/><circle cx="40.2" cy="23.2" r="0.9" fill="#f2f2f2"/><circle cx="44.2" cy="19.8" r="1.3" fill="#f2f2f2"/><circle cx="56.4" cy="17.3" r="0.8" fill="#f2f2f2"/><circle cx="56.9" cy="16.6" r="0.9" fill="#f2f2f2"/><circle cx="56.2" cy="19.1" r="1.1" fill="#f2f2f2"/></svg>
<svg width="84" height="51" style="left:251px;top:240px" viewBox="0 0 84 51"><path d="M40,41 L41,34 M44,41 L43,34 M38,41 H46" stroke="#eee" stroke-width="1.4"/><path d="M31,34 C27,31 28,25 29.5,21 C29,13 35,9.5 42,9.5 C50,9 55,13 55,19 C57,24 56,31 51,34 C46,35.5 38,35.5 31,34 Z" fill="#9a9a30" stroke="#e8e880" stroke-width="1.3"/><circle cx="39.8" cy="26.5" r="0.9" fill="#f0f060"/><circle cx="34.6" cy="20.9" r="1.7" fill="#f0f060"/><circle cx="42.8" cy="25.8" r="0.9" fill="#c0c060"/><circle cx="48.9" cy="26.5" r="1.7" fill="#e8e8a0"/><circle cx="35.5" cy="16.1" r="1.4" fill="#f0f060"/><circle cx="32.2" cy="29.4" r="1.4" fill="#f0f060"/><circle cx="47.4" cy="28.0" r="1.4" fill="#e8e8a0"/><circle cx="32.4" cy="19.0" r="1.4" fill="#e8e8a0"/><circle cx="37.1" cy="17.1" r="1.4" fill="#e8e8a0"/><circle cx="35.5" cy="17.0" r="1.6" fill="#c0c060"/><circle cx="30.3" cy="24.9" r="1.1" fill="#f0a040"/><circle cx="44.9" cy="13.3" r="0.9" fill="#d8d840"/><circle cx="39.3" cy="30.2" r="1.5" fill="#f0a040"/><circle cx="39.1" cy="33.6" r="1.3" fill="#e8e8a0"/><circle cx="45.7" cy="28.3" r="1.2" fill="#f8f8d0"/><circle cx="45.4" cy="21.7" r="1.1" fill="#f0a040"/><circle cx="36.8" cy="29.1" r="0.9" fill="#f8f8d0"/><circle cx="47.4" cy="25.8" r="0.9" fill="#e8e8a0"/><circle cx="39.0" cy="13.7" r="1.1" fill="#f8f8d0"/><circle cx="34.3" cy="28.7" r="1.7" fill="#f0f060"/><circle cx="36.0" cy="29.6" r="0.9" fill="#f8f8d0"/><circle cx="42.5" cy="18.4" r="1.2" fill="#d8d840"/><circle cx="49.6" cy="18.5" r="1.2" fill="#ffffff"/><circle cx="30.8" cy="19.2" r="1.7" fill="#c0c060"/><circle cx="40.6" cy="29.8" r="1.5" fill="#f0a040"/><circle cx="37.6" cy="26.3" r="1.0" fill="#e8e8a0"/><circle cx="42.7" cy="28.0" r="1.6" fill="#f8f8d0"/><circle cx="44.7" cy="28.1" r="1.2" fill="#ffffff"/><circle cx="35.6" cy="28.8" r="1.5" fill="#ffffff"/><circle cx="32.2" cy="21.6" r="1.3" fill="#f0f060"/><circle cx="50.4" cy="14.4" r="1.2" fill="#c0c060"/><circle cx="35.2" cy="27.4" r="0.9" fill="#c0c060"/><circle cx="47.2" cy="24.7" r="0.9" fill="#ffffff"/><circle cx="38.8" cy="20.3" r="1.3" fill="#ffffff"/><circle cx="51.3" cy="19.7" r="1.7" fill="#e8e8a0"/><circle cx="38.4" cy="19.6" r="1.8" fill="#60c040"/><circle cx="35.1" cy="17.8" r="1.6" fill="#e8e8a0"/><circle cx="50.5" cy="22.2" r="1.1" fill="#f8f8d0"/><circle cx="48.7" cy="30.3" r="1.3" fill="#60c040"/><circle cx="38.8" cy="14.8" r="1.8" fill="#d8d840"/><circle cx="37.3" cy="21.7" r="1.6" fill="#f0f060"/><circle cx="39.0" cy="31.3" r="1.5" fill="#e8e8a0"/><circle cx="41.5" cy="29.4" r="1.2" fill="#ffffff"/><circle cx="43.6" cy="30.8" r="1.4" fill="#f0a040"/><circle cx="33.6" cy="15.8" r="1.6" fill="#d8d840"/><circle cx="46.5" cy="13.5" r="1.0" fill="#d8d840"/><circle cx="31.3" cy="22.9" r="1.6" fill="#f0f060"/><circle cx="36.6" cy="23.4" r="1.2" fill="#f0a040"/><circle cx="53.5" cy="18.1" r="0.9" fill="#f0a040"/><circle cx="48.9" cy="27.2" r="1.0" fill="#f0a040"/><circle cx="33.6" cy="14.8" r="1.3" fill="#f0f060"/><circle cx="35.6" cy="14.1" r="1.6" fill="#e8e8a0"/><circle cx="47.7" cy="27.4" r="1.3" fill="#d8d840"/><circle cx="46.8" cy="31.7" r="0.9" fill="#f0a040"/><circle cx="52.0" cy="19.3" r="1.2" fill="#f8f8d0"/><circle cx="52.1" cy="19.3" r="1.8" fill="#ffffff"/><circle cx="51.5" cy="24.0" r="1.6" fill="#f8f8d0"/><circle cx="48.9" cy="30.8" r="1.5" fill="#f8f8d0"/><circle cx="36.5" cy="29.4" r="0.8" fill="#ffffff"/><circle cx="45.3" cy="13.2" r="1.3" fill="#e8e8a0"/><circle cx="49.5" cy="19.4" r="1.6" fill="#d8d840"/><circle cx="43.5" cy="28.1" r="1.3" fill="#60c040"/><circle cx="42.6" cy="16.0" r="1.6" fill="#c0c060"/><circle cx="52.0" cy="26.2" r="1.5" fill="#f8f8d0"/><circle cx="45.6" cy="14.9" r="1.3" fill="#ffffff"/><circle cx="40.3" cy="22.3" r="1.6" fill="#f8f8d0"/><circle cx="33.5" cy="16.1" r="1.0" fill="#ffffff"/><circle cx="31.5" cy="24.1" r="1.1" fill="#f0f060"/><circle cx="32.7" cy="21.5" r="1.7" fill="#e8e8a0"/><circle cx="47.1" cy="24.3" r="1.6" fill="#f0f060"/></svg>
<svg width="84" height="51" style="left:346px;top:240px" viewBox="0 0 84 51"><g stroke="#20e0e0" stroke-width="1.6"><path d="M20.5,14 V18 M16.5,10 L20.5,14 L24.5,10 M63.5,14 V18 M59.5,10 L63.5,14 L67.5,10"/></g><g fill="#ff2020"><rect x="15" y="9" width="2.5" height="1.5"/><rect x="23.5" y="9" width="2.5" height="1.5"/><rect x="58" y="9" width="2.5" height="1.5"/><rect x="66.5" y="9" width="2.5" height="1.5"/></g><rect x="25.5" y="22.5" width="32" height="18" stroke="#ff2020" stroke-width="1.2" fill="none"/><rect x="15.5" y="31" width="10" height="8" stroke="#ff2020" stroke-width="1" fill="none"/><rect x="57.5" y="31" width="10" height="8" stroke="#ff2020" stroke-width="1" fill="none"/><path d="M16,33.5 H25 M16,36.5 H25 M58,33.5 H67 M58,36.5 H67" stroke="#20e0e0" stroke-width="1"/><path d="M27,24 H56 L42,32 Z M27,32 H56 M28,33 Q42,44 55,33" stroke="#20e0e0" stroke-width="1" fill="none"/><rect x="29" y="33" width="25" height="6" fill="#208890" opacity="0.7"/></svg>
<svg width="84" height="51" style="left:536px;top:240px" viewBox="0 0 84 51"><path d="M42,39 V27 L39,22 L36,13 M46,20 V10 M46,16 L48,18" stroke="#ddd" stroke-width="1.1" fill="none"/><circle cx="39" cy="22" r="1.8" stroke="#ddd" stroke-width="1" fill="none"/></svg>
<svg width="84" height="51" style="left:251px;top:312px" viewBox="0 0 84 51"><path d="M30,27 L47,10 L57,20 L44,35 L26,31.5 Z" stroke="#c020d0" stroke-width="1.2" fill="none" stroke-linejoin="round"/><path d="M31,33 L28.5,41 Q29,44 32,43.5 L38,35" stroke="#c020d0" stroke-width="1.1" fill="none"/></svg>
<svg width="84" height="51" style="left:346px;top:312px" viewBox="0 0 84 51"><g stroke="#ccc" stroke-width="0.9" fill="none"><path d="M16,10 H67 V24 H54 V21 H27 V34 H16 Z"/><rect x="54" y="10" width="13" height="14"/><rect x="34" y="12" width="13" height="8"/><rect x="18" y="22" width="9" height="18"/><path d="M27,34 V40 H16"/></g><rect x="36" y="13" width="9" height="6" fill="#888"/><rect x="19" y="32" width="7" height="6" fill="#777"/><circle cx="20.5" cy="27" r="1.3" fill="#ccc"/></svg>
<svg width="84" height="51" style="left:441px;top:312px" viewBox="0 0 84 51"><g stroke="#ccc" stroke-width="0.9" fill="none"><path d="M26,10 V40 M26,10 H58 V19 H31 V32 H58"/><rect x="30.5" y="11" width="5" height="7"/><rect x="36" y="11" width="5" height="7"/><rect x="48" y="32" width="10" height="9"/><rect x="32" y="34" width="12" height="6"/></g><rect x="33" y="35" width="10" height="4" fill="#999"/></svg>
<svg width="84" height="51" style="left:536px;top:312px" viewBox="0 0 84 51"><g stroke="#c8a040" stroke-width="1.1" fill="none"><rect x="30" y="19" width="24" height="12"/><path d="M42,19 V31 M30,25 H54"/><path d="M33,19 V13 Q33,10 36.5,10 Q40,10 40,13 V19 M44,19 V13 Q44,10 47.5,10 Q51,10 51,13 V19 M33,31 V37 Q33,40 36.5,40 Q40,40 40,37 V31 M44,31 V37 Q44,40 47.5,40 Q51,40 51,37 V31 M30,21.5 H25 Q22,21.5 22,25 Q22,28.5 25,28.5 H30 M54,21.5 H59 Q62,21.5 62,25 Q62,28.5 59,28.5 H54"/></g></svg>
<script>
(function(){var s=document.createElement('span');s.style.cssText='position:absolute;left:0;top:0;font-size:100px;font-family:"Liberation Sans",sans-serif;visibility:hidden;white-space:nowrap';s.textContent='\u4e00\u4e00';document.body.appendChild(s);var w=s.getBoundingClientRect().width;document.body.removeChild(s);if(Math.abs(w-150)<4){document.body.className+=' tofu';var zs=document.querySelectorAll('.z');for(var k=0;k<zs.length;k++){var z=zs[k],t=z.textContent;z.textContent='';for(var j=0;j<t.length;j++){var e=document.createElement('i');e.textContent=t.charAt(j);z.appendChild(e);}}}})();
</script>
</body></html>
